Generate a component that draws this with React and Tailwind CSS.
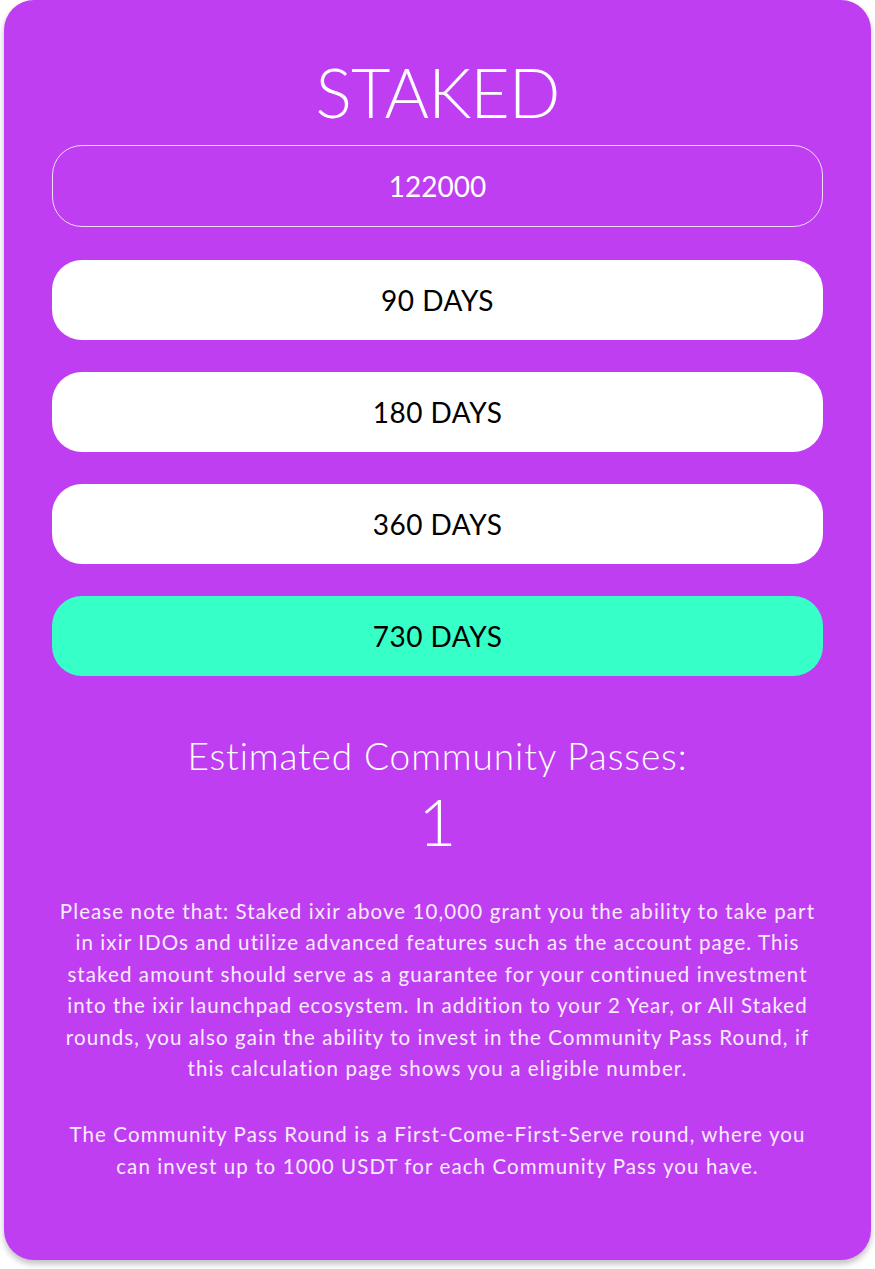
const options = ['90 DAYS', '180 DAYS', '360 DAYS', '730 DAYS']

const App = () => {
  const selected = '730 DAYS'
  return (
    <div className="bg-white min-h-[1269px] px-[4px] pb-[8px]" style={{ fontFamily: 'Lato, "Liberation Sans", sans-serif' }}>
      <div className="bg-[#c03ef2] rounded-[30px] shadow-[0_4px_6px_rgba(0,0,0,0.25)] px-[48px] pt-[52px] pb-[78px] flex flex-col items-center text-white">
        <h1 className="text-[68px] leading-[80px] font-light tracking-[-1px]">STAKED</h1>

        {/* staked amount */}
        <div className="mt-[13px] w-full h-[82px] rounded-[30px] border border-[#f2dcfb] flex items-center justify-center text-[28px] text-white">
          122000
        </div>

        {/* lock periods */}
        <div className="w-full mt-[33px] flex flex-col gap-[32px]">
          {options.map((o) => (
            <button
              key={o}
              className={
                'w-full h-[80px] rounded-[30px] text-black text-[28px] tracking-[0.5px] ' +
                (o === selected ? 'bg-[#37ffc8]' : 'bg-white')
              }
            >
              {o}
            </button>
          ))}
        </div>

        <div className="mt-[56px] text-[37px] leading-[48px] font-light tracking-[0.9px]">Estimated Community Passes:</div>
        <div className="mt-[4px] text-[66px] leading-[74px] font-light">1</div>

        <div className="mt-[38px] text-[20.5px] leading-[31.4px] text-center text-[#f8ecfd] tracking-[1.1px]">
          <p>
            Please note that: Staked ixir above 10,000 grant you the ability to take part
            <br />
            in ixir IDOs and utilize advanced features such as the account page. This
            <br />
            staked amount should serve as a guarantee for your continued investment
            <br />
            into the ixir launchpad ecosystem. In addition to your 2 Year, or All Staked
            <br />
            rounds, you also gain the ability to invest in the Community Pass Round, if
            <br />
            this calculation page shows you a eligible number.
          </p>
          <p className="mt-[35px]">
            The Community Pass Round is a First-Come-First-Serve round, where you
            <br />
            can invest up to 1000 USDT for each Community Pass you have.
          </p>
        </div>
      </div>
    </div>
  )
}

export default App
